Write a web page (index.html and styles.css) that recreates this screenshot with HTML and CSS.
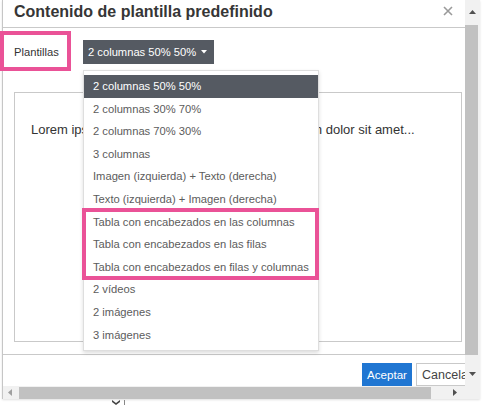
FILE: index.html
```html
<!DOCTYPE html>
<html lang="es">
<head>
<meta charset="utf-8">
<title>Contenido de plantilla predefinido</title>
<link rel="stylesheet" href="styles.css">
</head>
<body>
<div class="screen">
  <div class="dialog">
    <div class="head">
      <h1 class="title">Contenido de plantilla predefinido</h1>
      <svg class="close" width="10" height="10" viewBox="0 0 10 10"><path d="M1 1L9 9M9 1L1 9" stroke="#9a9a9a" stroke-width="1.6" fill="none"/></svg>
    </div>
    <div class="body">
      <div class="toolbar">
        <span class="label">Plantillas</span>
        <button class="dd">2 columnas 50% 50%<svg class="caret" width="6" height="4" viewBox="0 0 6 4"><path d="M0 0H6L3 3.5Z" fill="#fff"/></svg></button>
      </div>
      <div class="editor">
        <p class="col">Lorem ipsum dolor sit amet...</p>
        <p class="col">Lorem ipsum dolor sit amet...</p>
      </div>
    </div>
    <div class="foot">
      <button class="btn ok">Aceptar</button>
      <button class="btn cancel">Cancelar</button>
    </div>
  </div>
  <div class="vscroll">
    <div class="varrow up"><svg width="7" height="4" viewBox="0 0 7 4"><path d="M0 4H7L3.5 0Z" fill="#505050"/></svg></div>
    <div class="vthumb"></div>
    <div class="varrow down"><svg width="7" height="4" viewBox="0 0 7 4"><path d="M0 0H7L3.5 4Z" fill="#505050"/></svg></div>
  </div>
  <div class="hscroll">
    <svg class="harrow" width="4" height="7" viewBox="0 0 4 7"><path d="M4 0V7L0 3.5Z" fill="#a0a0a0"/></svg>
    <div class="hthumb"></div>
    <svg class="harrow right" width="4" height="7" viewBox="0 0 4 7"><path d="M0 0V7L4 3.5Z" fill="#505050"/></svg>
  </div>
  <div class="corner"></div>
</div>
<div class="below">
  <svg class="mark" width="8" height="5" viewBox="0 0 8 5"><path d="M0 0L4 3L8 0V2L4 5L0 2Z" fill="#444"/></svg>
  <span class="tick"></span>
</div>

<ul class="menu">
  <li class="item active">2 columnas 50% 50%</li>
  <li class="item">2 columnas 30% 70%</li>
  <li class="item">2 columnas 70% 30%</li>
  <li class="item">3 columnas</li>
  <li class="item">Imagen (izquierda) + Texto (derecha)</li>
  <li class="item">Texto (izquierda) + Imagen (derecha)</li>
  <li class="item">Tabla con encabezados en las columnas</li>
  <li class="item">Tabla con encabezados en las filas</li>
  <li class="item">Tabla con encabezados en filas y columnas</li>
  <li class="item">2 vídeos</li>
  <li class="item">2 imágenes</li>
  <li class="item">3 imágenes</li>
</ul>
<div class="hl hl-label"></div>
<div class="hl hl-menu"></div>
</body>
</html>
```
FILE: styles.css
```css
* { box-sizing: border-box; }
html, body {
  margin: 0;
  padding: 0;
  width: 482px;
  height: 405px;
  overflow: hidden;
  background: #fff;
  font-family: "Liberation Sans", Arial, sans-serif;
}
body { position: relative; }

.screen {
  margin-left: 2px;
  width: 478px;
  border-left: 1px solid #c6c6c6;
  display: grid;
  grid-template-columns: 462px 15px;
  grid-template-rows: 386px 13px;
  box-shadow: 0 1px 2px rgba(0,0,0,0.12);
}

.dialog {
  overflow: hidden;
  display: flex;
  flex-direction: column;
  background: #fff;
}

.head {
  height: 28px;
  border-bottom: 1px solid #c9c9c9;
  display: flex;
  justify-content: space-between;
  align-items: flex-start;
  padding: 0 12px 0 11px;
}
.title {
  margin: 0;
  font-size: 16px;
  line-height: 23px;
  font-weight: bold;
  color: #363636;
  white-space: nowrap;
}
.close { margin-top: 6px; }

.body {
  height: 327px;
  display: flex;
  flex-direction: column;
}
.toolbar {
  margin-top: 12px;
  height: 24px;
  display: flex;
  align-items: center;
}
.label {
  width: 80px;
  padding-left: 11px;
  font-size: 11.2px;
  color: #333;
}
.dd {
  width: 131px;
  height: 24px;
  border: 0;
  margin: 0;
  padding: 0 0 0 5px;
  background: #555a62;
  color: #fff;
  font-family: inherit;
  font-size: 11.2px;
  display: flex;
  align-items: center;
  gap: 5px;
}
.caret { margin-top: 1px; }

.editor {
  margin: 28px 0 0 11px;
  width: 448px;
  height: 250px;
  border: 1px solid #c9c9c9;
  display: grid;
  grid-template-columns: 216px 1fr;
  padding: 29px 0 0 16px;
  align-content: start;
}
.col {
  margin: 0;
  font-size: 13px;
  line-height: 16px;
  color: #333;
  white-space: nowrap;
}

.foot {
  flex: 1;
  border-top: 1px solid #c9c9c9;
  padding: 8px 0 0 359px;
  display: flex;
  gap: 4px;
  align-items: flex-start;
}
.btn {
  flex: none;
  height: 23px;
  margin: 0;
  font-family: inherit;
  white-space: nowrap;
}
.ok {
  width: 50px;
  border: 0;
  padding: 0;
  background: #2076d2;
  color: #fff;
  font-size: 11.6px;
}
.cancel {
  border: 1px solid #c9c9c9;
  background: #fff;
  color: #444;
  font-size: 12.5px;
  padding: 0 5px;
  text-align: left;
}

.vscroll {
  background: #f1f1f1;
  display: flex;
  flex-direction: column;
}
.varrow {
  display: flex;
  justify-content: center;
  padding-right: 1px;
}
.varrow.up { height: 25px; padding-top: 10px; }
.vthumb {
  height: 330px;
  margin-right: 2px;
  background: #c1c1c1;
}
.varrow.down { padding-top: 17px; }

.hscroll {
  background: #f1f1f1;
  display: flex;
  align-items: center;
  padding-left: 5px;
}
.hthumb {
  margin-left: 7px;
  width: 412px;
  height: 12px;
  background: #c1c1c1;
}
.harrow.right { margin-left: 22px; }
.corner { background: #f1f1f1; }

.below {
  height: 6px;
  position: relative;
  display: flex;
  align-items: flex-end;
  padding-left: 112px;
  gap: 4px;
}
.mark { display: block; }
.tick {
  width: 1px;
  height: 5px;
  background: #888;
}

.menu {
  position: absolute;
  left: 83px;
  top: 70px;
  width: 236px;
  margin: 0;
  padding: 4px 0;
  list-style: none;
  background: #fff;
  border: 1px solid #dedede;
  box-shadow: 0 2px 4px rgba(0,0,0,0.14);
}
.item {
  height: 22.6px;
  line-height: 22.6px;
  padding-left: 9px;
  font-size: 11.2px;
  color: #5c5c5c;
  white-space: nowrap;
}
.item.active {
  background: #555a62;
  color: #fff;
}

.hl {
  position: absolute;
  border: 4px solid #ea5297;
}
.hl-label { left: 0; top: 31px; width: 71px; height: 40px; }
.hl-menu { left: 82px; top: 208px; width: 237px; height: 72px; }
```
